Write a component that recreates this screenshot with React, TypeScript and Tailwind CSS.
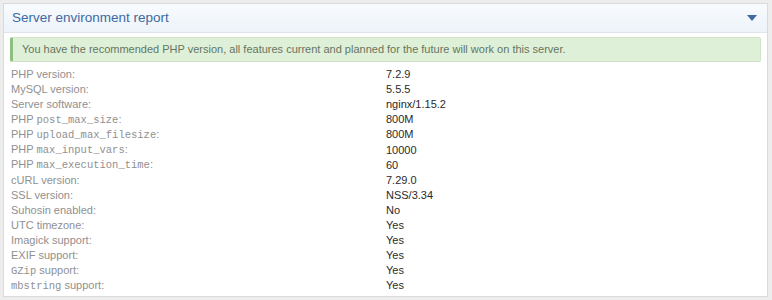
const rows: { label: React.ReactNode; value: string }[] = [
  { label: 'PHP version:', value: '7.2.9' },
  { label: 'MySQL version:', value: '5.5.5' },
  { label: 'Server software:', value: 'nginx/1.15.2' },
  { label: <>PHP <Code>post_max_size</Code>:</>, value: '800M' },
  { label: <>PHP <Code>upload_max_filesize</Code>:</>, value: '800M' },
  { label: <>PHP <Code>max_input_vars</Code>:</>, value: '10000' },
  { label: <>PHP <Code>max_execution_time</Code>:</>, value: '60' },
  { label: 'cURL version:', value: '7.29.0' },
  { label: 'SSL version:', value: 'NSS/3.34' },
  { label: 'Suhosin enabled:', value: 'No' },
  { label: 'UTC timezone:', value: 'Yes' },
  { label: 'Imagick support:', value: 'Yes' },
  { label: 'EXIF support:', value: 'Yes' },
  { label: <><Code>GZip</Code> support:</>, value: 'Yes' },
  { label: <><Code>mbstring</Code> support:</>, value: 'Yes' },
]

function Code({ children }: { children: React.ReactNode }) {
  return <code className="font-['Liberation_Mono',monospace] text-[10.5px]">{children}</code>
}

export default function App() {
  return (
    <div className="w-[772px] h-[300px] bg-[#ededed] p-[3px] font-['Liberation_Sans',Arial,sans-serif]">
      <div className="bg-white border border-[#dadada] h-[294px] w-[765px]">
        {/* Header */}
        <div className="h-[29px] flex items-center justify-between px-[8px] border-b border-[#dfe5ec] bg-gradient-to-b from-[#f8fbfe] to-[#edf3fa]">
          <h2 className="text-[13.5px] text-[#3d6aa0]">Server environment report</h2>
          <svg width="10" height="6" viewBox="0 0 10 6" className="mr-[2px]">
            <path d="M0 0 L10 0 L5 6 Z" fill="#3d6aa0" />
          </svg>
        </div>

        <div className="px-[6px] pt-[4px]">
          {/* Alert */}
          <div className="h-[25px] flex items-center bg-[#dff0d8] border border-[#cfe3c6] border-l-[3px] border-l-[#8fbf7e] rounded-[2px] pl-[9px] text-[11px] text-[#66755f]">
            You have the recommended PHP version, all features current and planned for the future will work on this server.
          </div>

          {/* Table */}
          <div className="mt-[5px] pl-[1px]">
            {rows.map((r, i) => (
              <div key={i} className="flex h-[15.1px] items-center text-[11px] leading-[15px]">
                <div className="w-[375px] text-[#909090]">{r.label}</div>
                <div className="text-[#2a2a2a]">{r.value}</div>
              </div>
            ))}
          </div>
        </div>
      </div>
    </div>
  )
}
